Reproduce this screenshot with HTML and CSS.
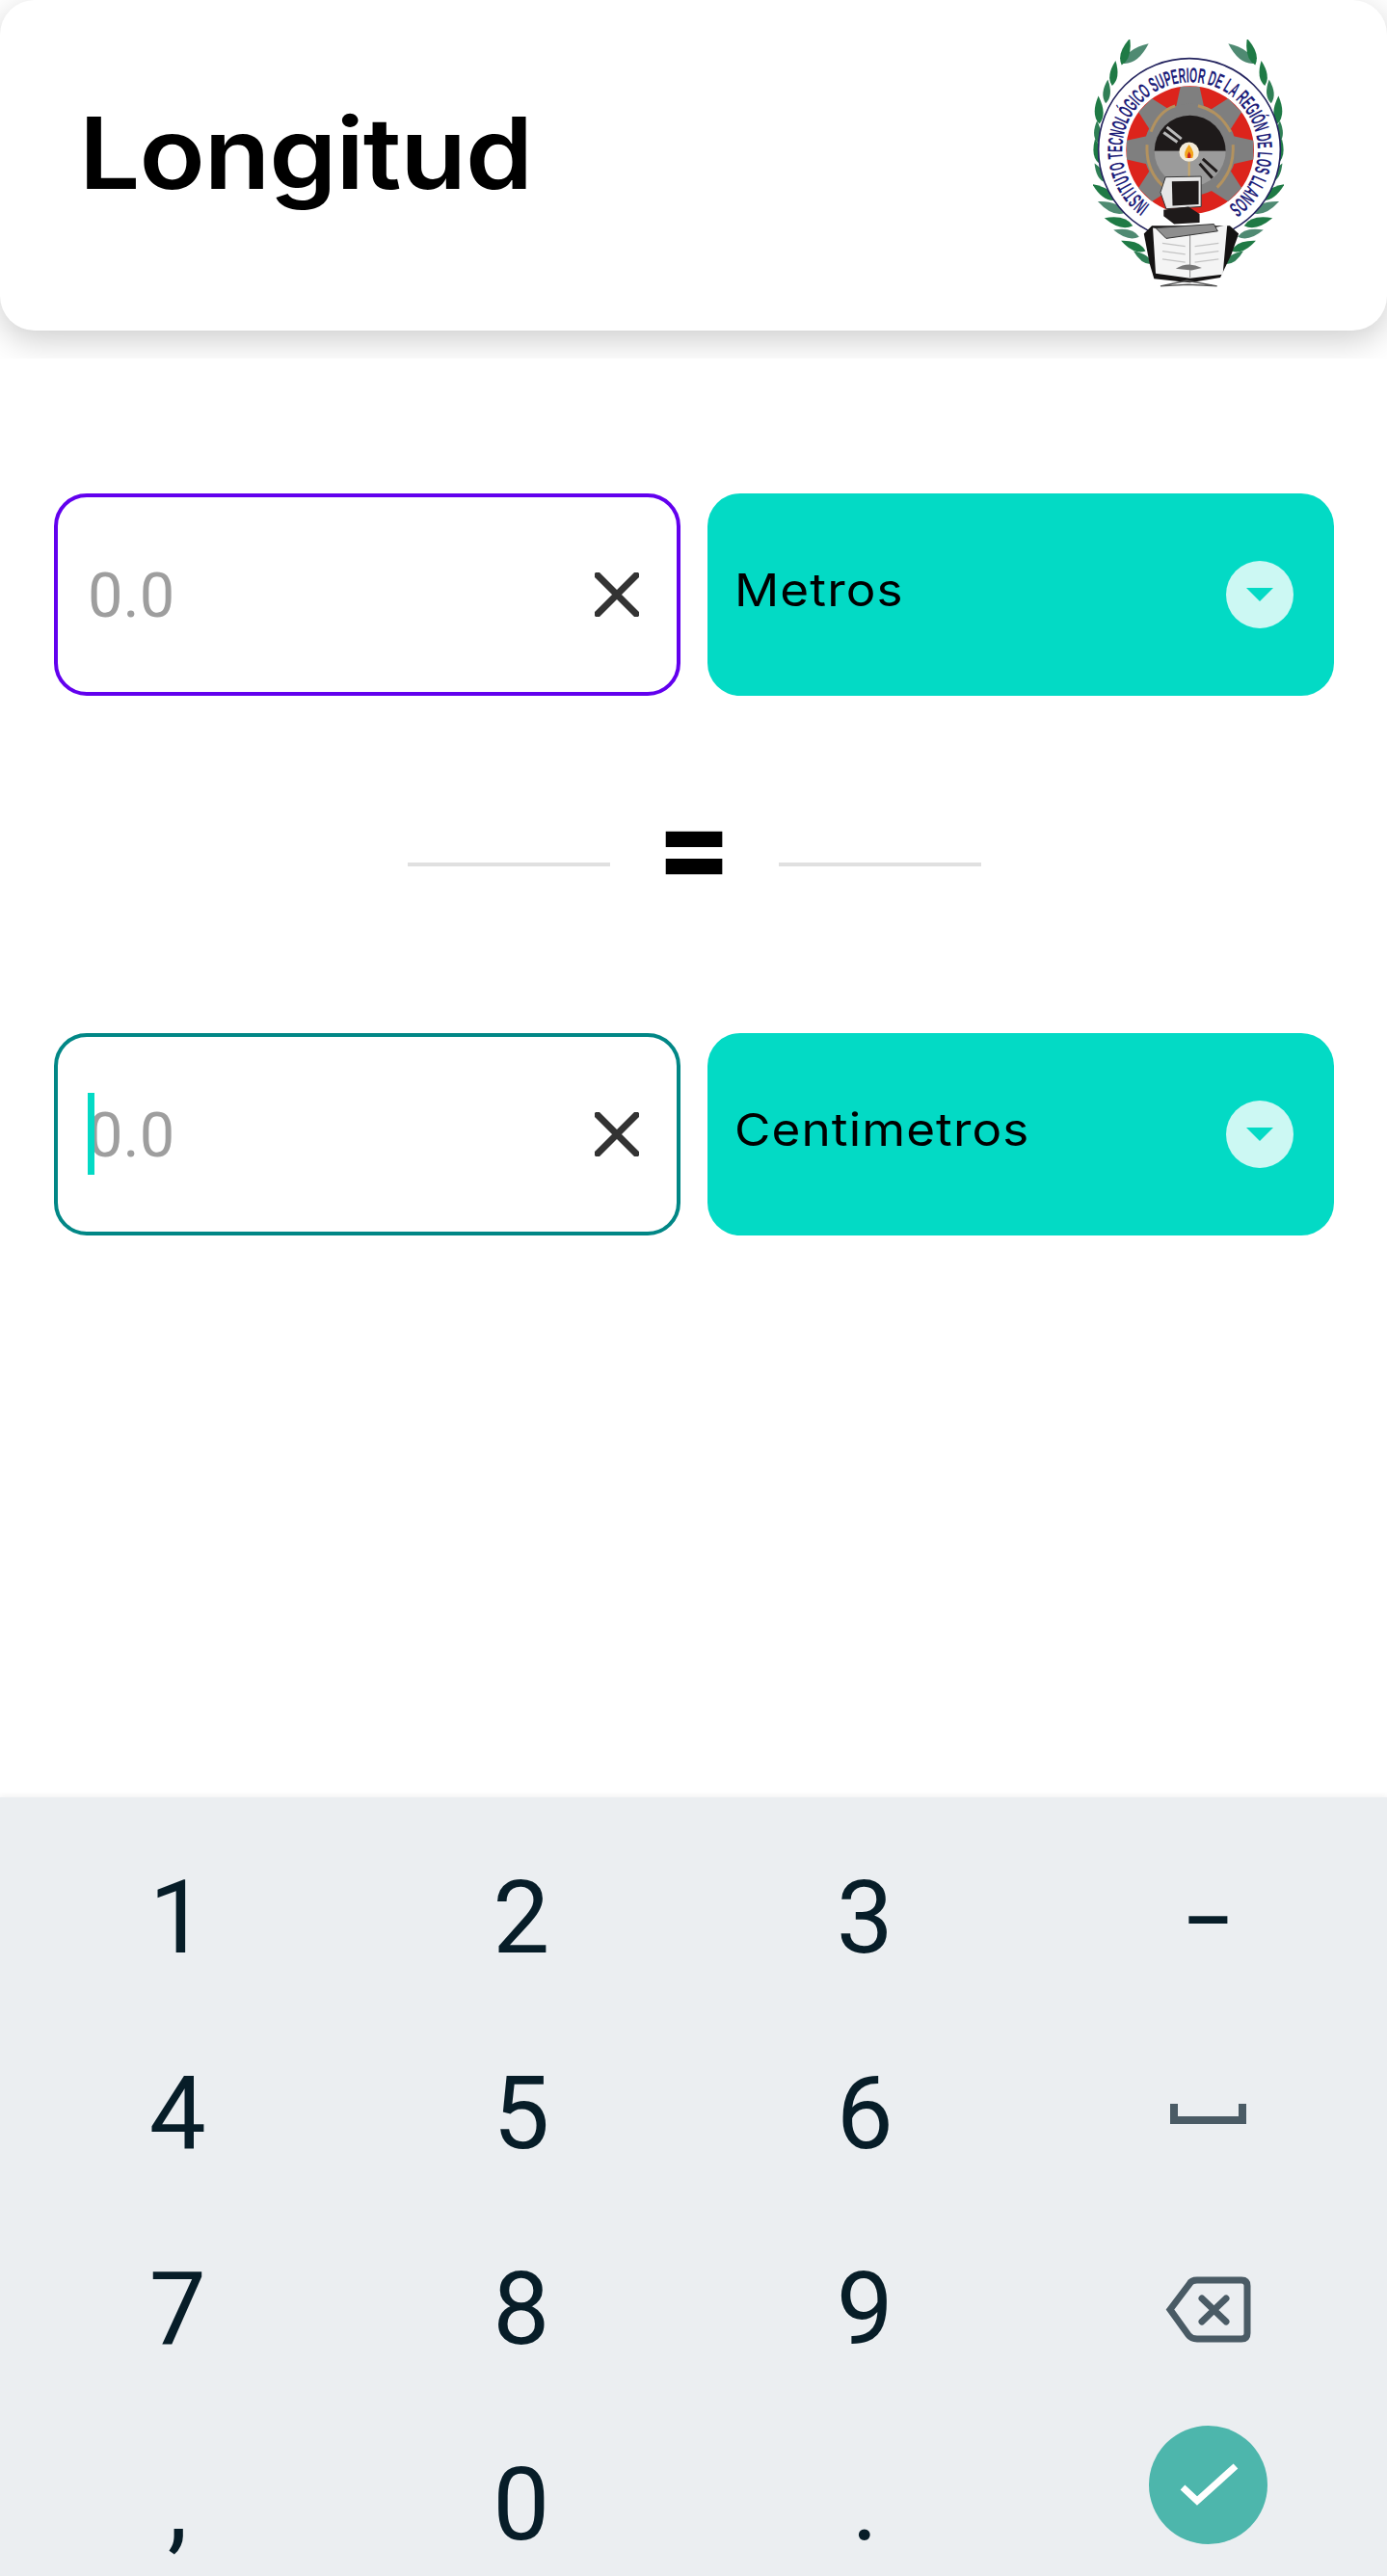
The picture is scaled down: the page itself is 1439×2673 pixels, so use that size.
FILE: index.html
```html
<!doctype html>
<html lang="es">
<head>
    <meta charset="UTF-8" />
    <title>Longitud</title>
    <link rel="stylesheet" href="styles.css">
</head>
<body>
<div class="header-clip">
    <header class="header">
        <h1 class="title">Longitud</h1>
        <svg class="logo" viewBox="250 120 600 790" aria-label="Escudo">
            <defs>
                <path id="leaf" d="M0 0Q30 -27 88 0Q30 27 0 0Z" />
                <g id="laurel">
                    <use href="#leaf" fill="#4f8a72" transform="translate(345 195) rotate(-38) scale(1.15)" />
                    <use href="#leaf" fill="#1f7a45" transform="translate(340 200) rotate(-73)" />
                    <use href="#leaf" fill="#1f7a45" transform="translate(310 265) rotate(-82) scale(.9)" />
                    <use href="#leaf" fill="#2f7f55" transform="translate(290 320) rotate(-85) scale(.85)" />
                    <use href="#leaf" fill="#1f7a45" transform="translate(270 385) rotate(-92)" />
                    <use href="#leaf" fill="#2f7f55" transform="translate(265 445) rotate(-92) scale(.8)" />
                    <use href="#leaf" fill="#1f7a45" transform="translate(270 510) rotate(-100) scale(.9)" />
                    <use href="#leaf" fill="#2f7f55" transform="translate(290 570) rotate(-120) scale(.8)" />
                    <use href="#leaf" fill="#1f7a45" transform="translate(320 625) rotate(-145)" />
                    <use href="#leaf" fill="#4f8a72" transform="translate(350 665) rotate(-157) scale(1.05)" />
                    <use href="#leaf" fill="#1f7a45" transform="translate(375 705) rotate(-165) scale(1.05)" />
                    <use href="#leaf" fill="#4f8a72" transform="translate(395 740) rotate(-165) scale(.95)" />
                    <use href="#leaf" fill="#1f7a45" transform="translate(415 785) rotate(-157) scale(.95)" />
                    <use href="#leaf" fill="#2f7f55" transform="translate(435 825) rotate(-145) scale(.8)" />
                </g>
                <polygon id="tooth" points="525,268 585,268 602,345 508,345" fill="#7f7f7f" />
            </defs>
            <use href="#laurel" />
            <use href="#laurel" transform="translate(1100 0) scale(-1 1)" />
            <circle cx="553" cy="465" r="286" fill="#fff" stroke="#23235e" stroke-width="5" />
            <path id="ring" d="M429 639A213 213 0 1 1 681 639" fill="none" />
            <text class="logo-text" fill="#1c1c78"><textPath href="#ring" textLength="1075" lengthAdjust="spacingAndGlyphs">INSTITUTO TECNOLÓGICO SUPERIOR DE LA REGIÓN DE LOS LLANOS</textPath></text>
            <circle cx="555" cy="467" r="201" fill="#dc241c" />
            <use href="#tooth" />
            <use href="#tooth" transform="rotate(45 555 467)" />
            <use href="#tooth" transform="rotate(90 555 467)" />
            <use href="#tooth" transform="rotate(135 555 467)" />
            <use href="#tooth" transform="rotate(225 555 467)" />
            <use href="#tooth" transform="rotate(270 555 467)" />
            <use href="#tooth" transform="rotate(315 555 467)" />
            <circle cx="555" cy="467" r="145" fill="#7f7f7f" />
            <path d="M432 410Q455 345 508 328M580 328Q650 345 682 410M420 450Q415 530 470 580M690 450Q695 530 640 585" fill="none" stroke="#b3925f" stroke-width="9" />
            <path d="M443 470A112 112 0 0 1 667 470Z" fill="#1e1a1a" />
            <path d="M443 470A112 112 0 0 0 667 470Z" fill="#9b9b9b" />
            <path d="M482 395L528 432M472 412L515 442" stroke="#b9b9b9" stroke-width="9" />
            <path d="M595 495L640 535M585 510L625 555" stroke="#1e1a1a" stroke-width="9" />
            <circle cx="552" cy="473" r="31" fill="#f2ead8" />
            <path d="M552 450Q572 475 563 492H541Q532 475 552 450Z" fill="#f2a71e" />
            <path d="M552 472Q560 482 557 492H547Q545 482 552 472Z" fill="#c8281e" />
            <path d="M552 504V552" stroke="#c9a86a" stroke-width="6" />
            <path d="M410 730L435 705H680L708 730L685 795L650 868L555 884L442 872L428 825Z" fill="#141212" />
            <path d="M438 712L555 728L672 702L658 858L555 870L447 855Z" fill="#f4f4f4" />
            <path d="M555 728V868" stroke="#8a8a8a" stroke-width="3" />
            <path d="M468 760L540 770M468 785L540 795M468 810L540 820M570 770L645 760M570 795L645 785M570 820L645 810" stroke="#c4c4c4" stroke-width="4" />
            <path d="M478 552L590 550V645L480 652L462 600Z" fill="#e6e6e6" stroke="#333" stroke-width="3" />
            <path d="M498 566L582 564V638L500 642Z" fill="#1e1a1a" />
            <path d="M472 655L550 645L585 668L585 695L505 700L472 675Z" fill="#1e1a1a" />
            <path d="M447 712L630 700L642 722L480 745Z" fill="#8e8e8e" stroke="#333" stroke-width="3" />
            <path d="M510 840Q550 815 592 838L560 845Z" fill="#777" />
            <path d="M462 895L545 878L640 895M462 895L548 890L640 895" fill="none" stroke="#555" stroke-width="4" />
        </svg>
    </header>
</div>

<main class="converter">
    <div class="row">
        <div class="field field-active">
            <span class="placeholder">0.0</span>
            <svg class="clear" viewBox="0 0 46 46"><path d="M3 3L43 43M43 3L3 43" /></svg>
        </div>
        <div class="select">
            <span class="select-label">Metros</span>
            <span class="select-arrow"></span>
        </div>
    </div>
    <div class="equals-row">
        <div class="divider"></div>
        <div class="equals">=</div>
        <div class="divider"></div>
    </div>
    <div class="row">
        <div class="field field-focus">
            <span class="caret"></span>
            <span class="placeholder">0.0</span>
            <svg class="clear" viewBox="0 0 46 46"><path d="M3 3L43 43M43 3L3 43" /></svg>
        </div>
        <div class="select">
            <span class="select-label">Centimetros</span>
            <span class="select-arrow"></span>
        </div>
    </div>
</main>

<div class="keyboard">
    <div class="key">1</div>
    <div class="key">2</div>
    <div class="key">3</div>
    <div class="key"><span class="dash">-</span></div>
    <div class="key">4</div>
    <div class="key">5</div>
    <div class="key">6</div>
    <div class="key">
        <svg class="icon-space" viewBox="0 0 79 21"><path d="M4 0V17H75V0" /></svg>
    </div>
    <div class="key">7</div>
    <div class="key">8</div>
    <div class="key">9</div>
    <div class="key">
        <svg class="icon-back" viewBox="0 0 89 69">
            <path d="M5 34.5L25 8Q27 4 33 4H79Q85 4 85 10V59Q85 65 79 65H33Q27 65 24 61Z" />
            <path d="M38 23L63 47M63 23L38 47" />
        </svg>
    </div>
    <div class="key">,</div>
    <div class="key">0</div>
    <div class="key">.</div>
    <div class="key key-done">
        <svg class="icon-done" viewBox="0 0 123 123">
            <circle cx="61.5" cy="61.5" r="61.5" />
            <path d="M35 64L50 78L90 42" />
        </svg>
    </div>
</div>
</body>
</html>
```

FILE: styles.css
```css
html,body {
    width: 100%;
    height: 100%;
    padding: 0;
    margin: 0;
    background: white;
}
body {
    display: flex;
    flex-direction: column;
    height: 2673px;
    overflow: hidden;
    font-family: Roboto, sans-serif;
}
.header-clip {
    height: 372px;
    overflow: hidden;
    flex: none;
}
.header {
    display: flex;
    align-items: center;
    justify-content: space-between;
    height: 343px;
    padding: 0 107px 0 82px;
    box-sizing: border-box;
    background: white;
    border-radius: 36px;
    box-shadow: 0 10px 34px rgba(0, 0, 0, 0.2);
}
.title {
    margin: 0 0 26px;
    font-family: Inter, sans-serif;
    font-size: 103px;
    font-weight: 600;
    letter-spacing: -1px;
    line-height: 1.2;
    color: black;
    transform: scaleX(1.09);
    transform-origin: left;
}
.logo {
    width: 198px;
    height: 261px;
    flex: none;
}
.logo-text {
    font-family: "Liberation Sans Narrow", "Liberation Sans", sans-serif;
    font-size: 66px;
    font-weight: 700;
}
.converter {
    padding: 140px 55px 0 56px;
}
.row {
    display: grid;
    grid-template-columns: 650px 650px;
    gap: 28px;
}
.field {
    position: relative;
    display: flex;
    align-items: center;
    justify-content: space-between;
    height: 210px;
    box-sizing: border-box;
    padding: 0 39px 0 31px;
    border: 4px solid #6200ee;
    border-radius: 34px;
}
.field-focus {
    border-color: #018786;
}
.placeholder {
    padding-top: 2px;
    font-size: 65px;
    font-weight: 400;
    color: #9e9e9e;
}
.caret {
    position: absolute;
    left: 31px;
    top: 58px;
    width: 7px;
    height: 85px;
    background: #03dac5;
}
.clear {
    width: 46px;
    height: 46px;
}
.clear path {
    fill: none;
    stroke: #333;
    stroke-width: 7;
    stroke-linecap: round;
}
.select {
    display: flex;
    align-items: center;
    justify-content: space-between;
    height: 210px;
    box-sizing: border-box;
    padding: 0 42px 0 28px;
    background: #03dac5;
    border-radius: 34px;
}
.select-label {
    margin-bottom: 12px;
    font-family: Inter, sans-serif;
    font-size: 47px;
    letter-spacing: 1px;
    color: black;
    transform: scaleX(1.09);
    transform-origin: left;
}
.select-arrow {
    display: flex;
    align-items: center;
    justify-content: center;
    width: 70px;
    height: 70px;
    border-radius: 50%;
    background: #ccf8f3;
}
.select-arrow::after {
    content: "";
    border-top: 14px solid #03dac5;
    border-left: 14px solid transparent;
    border-right: 14px solid transparent;
}
.equals-row {
    display: flex;
    align-items: center;
    justify-content: center;
    gap: 59px;
    height: 350px;
}
.divider {
    width: 210px;
    height: 4px;
    background: #e0e0e0;
}
.equals {
    display: flex;
    justify-content: center;
    width: 57px;
    margin-bottom: 40px;
    font-family: Inter, sans-serif;
    font-size: 116px;
    font-weight: 800;
    line-height: 100px;
    color: black;
}
.keyboard {
    display: grid;
    grid-template-columns: repeat(4, 356.5px);
    grid-auto-rows: 203px;
    flex: none;
    height: 784px;
    padding: 24px 5px 0 6px;
    margin-top: auto;
    overflow: hidden;
    background: #ebeef1;
    box-shadow: 0 -2px 6px rgba(0, 0, 0, 0.05);
}
.key {
    display: flex;
    align-items: center;
    justify-content: center;
    font-size: 105px;
    line-height: 203px;
    color: #071d28;
}
.dash {
    display: inline-block;
    margin-bottom: 5px;
    transform: scaleX(1.6);
}
.icon-space {
    width: 79px;
    height: 21px;
}
.icon-space path {
    fill: none;
    stroke: #4a5b65;
    stroke-width: 8;
}
.icon-back {
    width: 89px;
    height: 69px;
}
.icon-back path {
    fill: none;
    stroke: #4a5b65;
    stroke-width: 7;
    stroke-linecap: round;
}
.key-done {
    align-items: flex-start;
    padding-top: 19px;
}
.icon-done {
    width: 123px;
    height: 123px;
}
.icon-done circle {
    fill: #4db6ac;
}
.icon-done path {
    fill: none;
    stroke: white;
    stroke-width: 7;
}
```
